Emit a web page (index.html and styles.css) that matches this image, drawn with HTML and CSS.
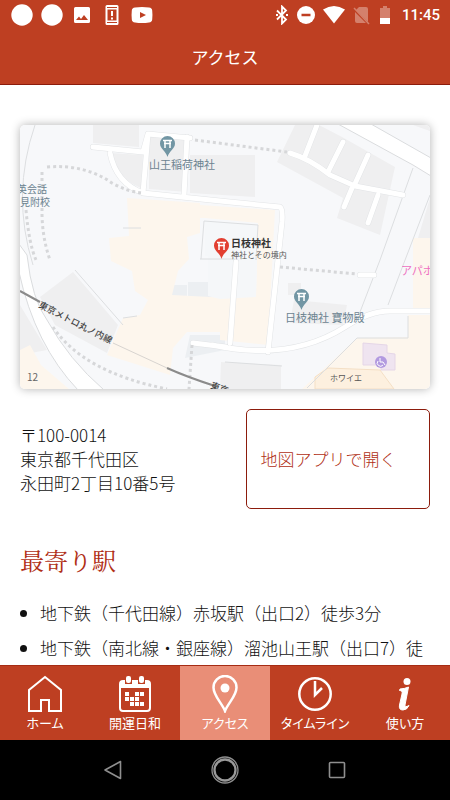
FILE: index.html
```html
<!DOCTYPE html>
<html lang="ja">

<head>
    <meta charset="UTF-8">
    <meta name="viewport" content="width=device-width, initial-scale=1.0">
    <title>アクセス</title>
    <link rel="stylesheet" href="styles.css">
</head>

<body>

    <header class="app-header">
        <div class="status-bar">
            <div class="status-left">
                <svg width="22" height="22" viewBox="0 0 22 22"><circle cx="11" cy="11" r="10.7" fill="#fff"/></svg>
                <svg width="22" height="22" viewBox="0 0 22 22"><circle cx="11" cy="11" r="10.7" fill="#fff"/></svg>
                <svg width="22" height="22" viewBox="0 0 22 22"><path fill="#fff" fill-rule="evenodd" d="M4.500 3h13a1.500 1.500 0 0 1 1.500 1.500v13a1.500 1.500 0 0 1-1.500 1.500h-13a1.500 1.500 0 0 1-1.500-1.500v-13a1.500 1.500 0 0 1 1.500-1.500zM5 16h12l-4-5-3 4-2-2.500z"/></svg>
                <svg width="22" height="22" viewBox="0 0 22 22"><path fill="#fff" fill-rule="evenodd" d="M6 1h10a1.500 1.500 0 0 1 1.500 1.500v17a1.500 1.500 0 0 1-1.500 1.500h-10a1.500 1.500 0 0 1-1.500-1.500v-17a1.500 1.500 0 0 1 1.500-1.500zM6 3v1h10v-1zM6 18v1h10v-1zM6.500 5.500v11h9v-11z"/><path d="M11 7v5M11 13.500v2" stroke="#fff" stroke-width="2"/></svg>
                <svg width="22" height="22" viewBox="0 0 22 22"><path fill="#fff" fill-rule="evenodd" d="M4 3.500q7-1 14 0 3 .3 3.200 3 .5 4.500 0 9-.2 2.700-3.200 3-7 1-14 0-3-.3-3.200-3-.5-4.500 0-9 .2-2.700 3.200-3zM9 8v6l6-3z"/></svg>
            </div>
            <div class="status-right">
                <svg width="14" height="20" viewBox="0 0 14 20"><path d="M2 5.500l9 9-4 4v-17l4 4-9 9" fill="none" stroke="#fff" stroke-width="1.800"/><path d="M1 10h2M11 10h2" stroke="#fff" stroke-width="1.800"/></svg>
                <svg width="20" height="20" viewBox="0 0 20 20"><circle cx="10" cy="10" r="9" fill="#fff"/><path d="M5.500 10h9" stroke="#be3f22" stroke-width="2.500"/></svg>
                <svg width="22" height="20" viewBox="0 0 22 20"><path d="M0 4.500Q11-2.500 22 4.500L11 18.500z" fill="#fff"/></svg>
                <svg width="18" height="20" viewBox="0 0 18 20"><path d="M7 2h7q2 0 2 2v13L4 5zM3 7l11 11H5q-2 0-2-2z" fill="#d4806c"/><path d="M2 3l15 16" stroke="#d4806c" stroke-width="1.500"/></svg>
                <svg width="16" height="20" viewBox="0 0 16 20"><path d="M3 3h3V1h4v2h3v10H3z" fill="#d4806c"/><path d="M3 13h10v6H3z" fill="#fff"/></svg>
                <span class="clock">11:45</span>
            </div>
        </div>
        <h1 class="page-title">アクセス</h1>
    </header>

    <main class="content">
        <svg class="map" viewBox="20 125 410 264" role="img" aria-label="日枝神社の地図">
            <rect x="20" y="125" width="410" height="264" fill="#f7f8fa"/>

            <!-- blocks -->
            <g fill="#efeff0">
                <path d="M93 125h46v22l-46-4zM110 153l33 2-2 33q-25-10-31-35zM149 136l38 4v52l-38-3zM190 155h65v42l-65-4z"/>
                <path d="M295 125h24l23 12 53 30-15 68-43-17 6-20-66-36z"/>
                <path d="M73 272l45 53-11 28-52-28-15-28zM20 305l12 20 15 25-27 5z"/>
                <path d="M294 300l53 5-4 20-53-2zM288 283h13v12h-13zM221 362l60 3v24h-61zM430 198l-12 40h12zM413 125h17v6z"/>
                <path d="M190 335h35v15l-40 8zM172 285h15v12h-15zM188 282h26v15h-26z" fill="#eceff2"/>
            </g>
            <g fill="#fdf6ed">
                <path d="M127 198l73 5v30l-13 4 2 22-11 12-6 24 58 3-2 34h-41l-14 16-3 27-63-20 16-37 17-3 8-15-13-9-3-20-21-10-2-23 20-2z"/>
                <path d="M200 205l75 5-7 135-48-5v-42l36-3 2-72-53-5h-5z"/>
                <path d="M20 350l10-5 11 20 28 24H20z"/>
                <path d="M357 338l51-1v-22h22v74H302zM413 238h17v70h-17z"/>
            </g>
            <path d="M205 221l53 4-2 72-36 2-12-3v-40h-3z" fill="#f5f7f9"/>
            <path d="M315 389v-12l13-9 52 2 14 19z" fill="#fdf0df" stroke="#f4dfc5"/>
            <path d="M363 343l24 2v8l8 1v16h-14v-5h-18z" fill="#efe4f0" stroke="#e5d6e7"/>

            <!-- main roads -->
            <g fill="#fff" stroke="#dadcde">
                <path d="M338 124l75 41 18 11v-18l-60-34z"/>
                <path d="M27 255q5 45 20 65 22 40 57 70H78q-43-45-59-118v-28z"/>
            </g>
            <path d="M413 168l-33 92-20 52M430 195l-28 73-14 37" class="map-line"/>
            <path d="M35 125q-24 70-2 140" class="map-line"/>

            <!-- narrow roads, outline first and white on top -->
            <g class="map-road-edge">
                <path id="lanes" d="M93 147l50 5 5-18 42 4M187 137l-3 58M110 153q6 30 33 40M148 134l-5 59 87 9 50 5q3 2 2 15l-14 130M236 262l-6 81M193 343l33 4M212 345q78 17 133-18 24-16 45-16h42M360 275h14M290 153q20 6 40 22l25 11 48 9M317 125l-12 31M343 142l-15 30M368 155l-14 31M352 188l-8 19M378 195l-10 28"/>
            </g>
            <use href="#lanes" class="map-road"/>

            <path d="M75 270l48 55M204 221l-3 38M204 221l54 4-2 35M200 259h35M225 362l57 4M357 338l-50 50M357 338h51v-22M123 318l14-2M123 228h18" class="map-line"/>

            <g class="map-steps">
                <path d="M47 167q38-3 65 16 16 9 31 10M42 172v40q0 25 8 48M26 210q3 34 10 50M53 327q30 45 114 62M192 345l-3 44M195 140l92 12M280 267l77 7"/>
            </g>

            <path d="M20 291l20 11M167 368q20 9 48 18" fill="none" stroke="#8b8b8b" stroke-width="2"/>
            <path d="M113 343l54 25" stroke="#d8d4d0" stroke-width="1"/>

            <!-- pins -->
            <g fill="#7296a4">
                <path id="pin" d="M167.500 157c-1.500-6-7.500-8-7.500-13.500a7.500 7.500 0 0 1 15 0c0 5.500-6 7.500-7.500 13.500z"/>
                <use href="#pin" x="134" y="153"/>
            </g>
            <path d="M221.500 259c-1.500-6-7.500-8-7.500-13.500a7.500 7.500 0 0 1 15 0c0 5.500-6 7.500-7.500 13.500z" fill="#e23f31"/>
            <g fill="none" stroke="#fff" stroke-width="1.500">
                <path id="torii" d="M163 140.500h9M164 143.500h7M165 140v8M170 140v8"/>
                <use href="#torii" x="134" y="153"/>
                <use href="#torii" x="54" y="102"/>
            </g>
            <circle cx="381" cy="362" r="6" fill="#b29ae0"/>
            <path d="M380 358v4h3l2 3M378 361a3 3 0 1 0 5 4" fill="none" stroke="#fff"/>

            <g class="map-place">
                <text x="149" y="169">山王稲荷神社</text>
                <text x="285" y="322">日枝神社 寶物殿</text>
            </g>
            <g class="map-school">
                <text x="17" y="193">英会話</text>
                <text x="20" y="206">見附校</text>
            </g>
            <text x="231" y="247" class="map-name">日枝神社</text>
            <text x="231" y="258" class="map-note">神社とその境内</text>
            <text x="330" y="381" class="map-note">ホワイエ</text>
            <text x="401" y="275" class="map-hotel">アパホ</text>
            <text x="27" y="381" class="map-number">12</text>
            <text x="38" y="307" transform="rotate(27 38 307)" class="map-rail">東京メトロ丸ノ内線</text>
            <text x="210" y="388" transform="rotate(20 210 388)" class="map-rail">東京</text>
        </svg>

        <div class="address-row">
            <address class="address">
                〒100-0014<br>
                東京都千代田区<br>
                永田町2丁目10番5号
            </address>
            <button type="button" class="map-button">地図アプリで開く</button>
        </div>

        <h2 class="section-title">最寄り駅</h2>
        <ul class="stations">
            <li>地下鉄（千代田線）赤坂駅（出口2）徒歩3分</li>
            <li>地下鉄（南北線・銀座線）溜池山王駅（出口7）徒歩3分</li>
        </ul>
    </main>

    <nav class="tab-bar">
        <a href="#home" class="tab">
            <svg width="36" height="38" viewBox="0 0 36 38"><path d="M2 36V15L18 2l16 13v21H22V25h-8v11z" fill="none" stroke="#fff" stroke-width="2"/></svg>
            ホーム
        </a>
        <a href="#calendar" class="tab">
            <svg width="36" height="38" viewBox="0 0 36 38">
                <rect x="3" y="6" width="30" height="30" rx="3" fill="none" stroke="#fff" stroke-width="2"/>
                <path d="M3 6h30v7H3z" fill="#fff"/>
                <path d="M8 1h7v8H8zM21 1h7v8h-7z" fill="#be3f22"/>
                <rect x="9" y="1" width="5" height="7" rx="2" fill="#fff"/>
                <rect x="22" y="1" width="5" height="7" rx="2" fill="#fff"/>
                <path d="M8 17h4v4H8zM18 17h4v4h-4zM23 17h4v4h-4zM8 22h4v4H8zM13 22h4v4h-4zM18 22h4v4h-4zM13 27h4v4h-4zM18 27h4v4h-4zM23 27h4v4h-4z" fill="#fff"/>
            </svg>
            開運日和
        </a>
        <a href="#access" class="tab tab-active" aria-current="page">
            <svg width="36" height="38" viewBox="0 0 36 38"><path d="M18 36C15 28 6.500 21 6.500 12.500a11.500 11.500 0 0 1 23 0C29.500 21 21 28 18 36z" fill="none" stroke="#fff" stroke-width="2.500"/><circle cx="18" cy="13" r="4.500" fill="#fff"/></svg>
            アクセス
        </a>
        <a href="#timeline" class="tab">
            <svg width="36" height="38" viewBox="0 0 36 38"><circle cx="18" cy="19" r="15.700" fill="none" stroke="#fff" stroke-width="2.500"/><path d="M18 6v14l7-7" fill="none" stroke="#fff" stroke-width="2.500"/></svg>
            タイムライン
        </a>
        <a href="#guide" class="tab">
            <svg width="36" height="38" viewBox="0 0 36 38"><circle cx="20" cy="6.500" r="3.500" fill="#fff"/><path d="M13 14q5-.3 8.500-2l-3.500 18q-.5 3 4 .5-2 4.500-6 4.500-4.500 0-3.500-5l2.500-11q.8-3.500-2.500-3.500z" fill="#fff" stroke="#fff"/></svg>
            使い方
        </a>
    </nav>

    <div class="system-nav">
        <button type="button" aria-label="戻る">
            <svg width="28" height="28" viewBox="0 0 28 28"><path d="M21.500 5.500v17L6 14z" fill="none" stroke="#8f8f8f" stroke-width="1.600" stroke-linejoin="round"/></svg>
        </button>
        <button type="button" aria-label="ホーム画面">
            <svg width="28" height="28" viewBox="0 0 28 28"><circle cx="14" cy="14" r="13" fill="none" stroke="#8f8f8f" stroke-width="1.300"/><circle cx="14" cy="14" r="10.500" fill="none" stroke="#999" stroke-width="2.300"/></svg>
        </button>
        <button type="button" aria-label="アプリ履歴">
            <svg width="28" height="28" viewBox="0 0 28 28"><rect x="6.500" y="6.500" width="15" height="15" rx="1" fill="none" stroke="#8f8f8f" stroke-width="1.600"/></svg>
        </button>
    </div>

</body>
</html>
```

FILE: styles.css
```css
* {
    box-sizing: border-box;
}

body {
    font-family: "Noto Sans CJK JP", sans-serif;
    font-size: 17px;
    font-weight: 300;
    line-height: 24px;
    color: #111;
    background-color: #fff;
    margin: 0;
    height: 100vh;
    display: flex;
    flex-direction: column;
}

svg {
    display: block;
    flex: none;
}

.app-header {
    flex: none;
    background-color: #be3f22;
    color: #fff;
    border-bottom: 1px solid #8c1c0c;
}

.status-bar {
    display: flex;
    justify-content: space-between;
    align-items: center;
    height: 30px;
    padding: 0 10px 0 11px;
}

.status-left,
.status-right {
    display: flex;
    align-items: center;
    gap: 8px;
}

.status-right {
    gap: 7px;
}

.clock {
    margin-left: 2px;
    font-family: Roboto, sans-serif;
    font-size: 15px;
    font-weight: 500;
}

.page-title {
    margin: 0;
    padding: 15px 0;
    font-size: 17px;
    font-weight: 400;
    text-align: center;
}

.content {
    flex: 1;
    min-height: 0;
    overflow: hidden;
    padding: 40px 20px 0;
}

.map {
    width: 100%;
    height: auto;
    border-radius: 5px;
    box-shadow: 0 0 10px rgba(0, 0, 0, 0.3);
}

.map-line {
    fill: none;
    stroke: #dcdee0;
}

.map-road-edge {
    fill: none;
    stroke: #e2e4e6;
    stroke-width: 6;
    stroke-linecap: round;
    stroke-linejoin: round;
}

/* the outline group sets its own stroke, so the copy on top is only the white core */
.map-road {
    fill: none;
    stroke: #fff;
    stroke-width: 5;
    stroke-linecap: round;
    stroke-linejoin: round;
}

.map-steps {
    fill: none;
    stroke: #d6d7d9;
    stroke-width: 3;
    stroke-dasharray: 3 3;
}

.map-place,
.map-school {
    font-size: 11px;
    font-weight: 400;
    fill: #6c8390;
}

.map-school {
    font-size: 10px;
}

.map-name {
    font-size: 10px;
    font-weight: 700;
    fill: #333;
}

.map-note {
    font-size: 8px;
    font-weight: 400;
    fill: #555;
}

.map-hotel {
    font-size: 11px;
    font-weight: 400;
    fill: #ee6fc0;
}

.map-number {
    font-size: 10px;
    font-weight: 400;
    fill: #666;
}

.map-rail {
    font-size: 9px;
    font-weight: 500;
    fill: #444;
}

.address-row {
    display: flex;
    justify-content: space-between;
    align-items: center;
    margin-top: 20px;
}

.address {
    font-style: normal;
}

.map-button {
    width: 45%;
    height: 100px;
    padding: 0 14px;
    font: inherit;
    color: #b02f16;
    text-align: left;
    background-color: #fff;
    border: 1px solid #8c1c0c;
    border-radius: 5px;
}

.section-title {
    margin: 35px 0 23px;
    font-family: "Noto Serif CJK JP", "Noto Sans CJK JP", serif;
    font-size: 24px;
    font-weight: 400;
    line-height: 32px;
    color: #b02f16;
}

.stations {
    margin: 0;
    padding-left: 20px;
    line-height: 28px;
}

.stations li {
    margin-bottom: 7px;
}

.tab-bar {
    flex: none;
    display: flex;
    height: 75px;
    background-color: #be3f22;
    border-top: 1px solid #a52c14;
}

.tab {
    flex: 1;
    display: flex;
    flex-direction: column;
    align-items: center;
    padding-top: 9px;
    font-size: 13px;
    font-weight: 400;
    font-feature-settings: "palt";
    line-height: 20px;
    color: #fff;
    text-decoration: none;
    white-space: nowrap;
}

.tab-active {
    background-color: #e98e77;
}

.system-nav {
    flex: none;
    display: flex;
    justify-content: center;
    align-items: center;
    gap: 84px;
    height: 60px;
    background-color: #000;
}

.system-nav button {
    padding: 0;
    background: none;
    border: none;
}
```
